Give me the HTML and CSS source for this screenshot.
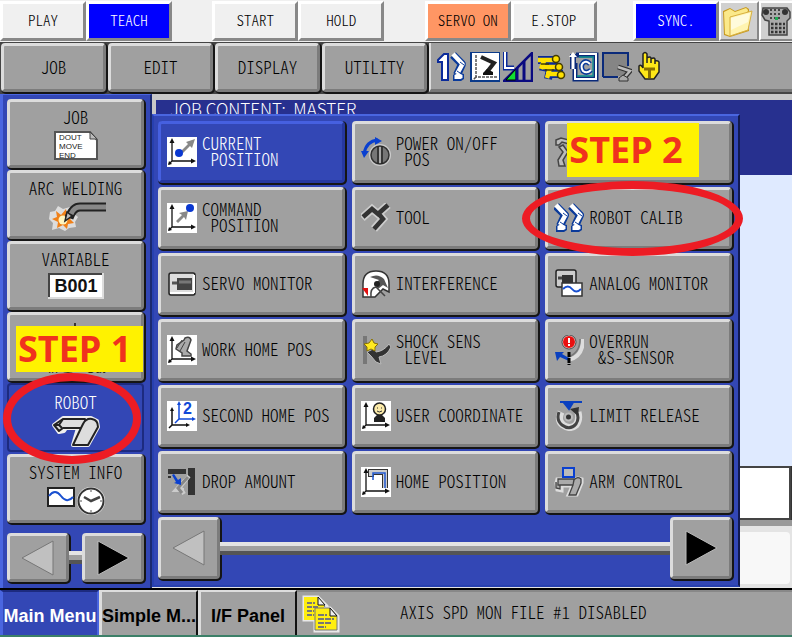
FILE: index.html
```html
<!DOCTYPE html>
<html lang="en">
<head>
<meta charset="utf-8">
<title>Robot menu</title>
<link rel="stylesheet" href="styles.css">
</head>
<body>
<svg class="defs" aria-hidden="true">
  <defs>
    <g id="axes">
      <rect width="30" height="30" fill="#fff"/>
      <path d="M5 3V24H27M5 24L2 27" fill="none" stroke="#111" stroke-width="1.3"/>
      <path d="M5 1l2.5 5h-5zM29 24l-5-2.5v5zM1 28l4-1-3-3z" fill="#111"/>
    </g>
    <g id="arm">
      <path d="M1 2L10 11L5 22" fill="none" stroke="#0a3a9a" stroke-width="8" stroke-linejoin="round"/>
      <path d="M1 28v-6l4-3 7 2v5l-3 2z" fill="#0a3a9a"/>
      <path d="M1 1L10.500 11L5 21" fill="none" stroke="#fff" stroke-width="4.500" stroke-linejoin="round"/>
      <path d="M2.500 26v-4l4-2 4 2v3l-2 1z" fill="#fff"/>
      <path d="M8 9l4 3M5 18l3 2" stroke="#0a3a9a" stroke-width="1"/>
    </g>
  </defs>
</svg>
<header class="status">
  <button class="key">PLAY</button>
  <button class="key key-on">TEACH</button>
  <span class="space"></span>
  <button class="key">START</button>
  <button class="key">HOLD</button>
  <span class="space"></span>
  <button class="key key-servo">SERVO ON</button>
  <button class="key">E.STOP</button>
  <span class="space space-small"></span>
  <button class="key key-on">SYNC.</button>
  <button class="key key-icon" aria-label="Folder"><svg width="34" height="34" viewBox="0 0 34 34"><path d="M2 7l7-3 5 3 11-4 3 2v22L9 33l-6-2z" fill="#c89a20"/><path d="M3 8l6-3 5 3 11-4 2 2-1 4L9 14v18l-5-2z" fill="#fbe98a"/><path d="M9 13l22-6-4 19L9 32z" fill="#fff4b0" stroke="#d8b040"/><path d="M10 14l19-5-2 9-17 8z" fill="#fffbdc"/></svg></button>
  <button class="key key-icon key-pad" aria-label="Pendant"><svg width="30" height="34" viewBox="0 0 30 34"><path d="M2 4h24l3 4v6l-3 3v14H8V17l-4-1-3-5z" fill="#aaa" stroke="#444" stroke-width="1.5"/><circle cx="5" cy="8" r="3" fill="#333"/><circle cx="24" cy="8" r="3" fill="#333"/><path d="M9 6h12M9 10h12M9 14h12" stroke="#444" stroke-width="2" stroke-dasharray="2 2"/><path d="M10 20h14M10 24h14M10 28h14" stroke="#333" stroke-width="2.5" stroke-dasharray="2.5 1.5"/><path d="M14 13h3v3h-3z" fill="#2a5"/></svg></button>
</header>
<nav class="menubar">
  <button class="bevel">JOB</button>
  <button class="bevel">EDIT</button>
  <button class="bevel">DISPLAY</button>
  <button class="bevel">UTILITY</button>
  <div class="tools">
    <svg width="30" height="30" viewBox="0 0 30 30"><path d="M1 8l6-6h4v26H5V10H1z" fill="#fff" stroke="#0a2a9a" stroke-width="2"/><use href="#arm" x="15" y="1"/></svg>
    <svg width="30" height="30" viewBox="0 0 30 30"><path d="M0 0h30v30H0z" fill="#0a3a8a"/><path d="M2 1h27v27H2z" fill="#fff"/><path d="M6 3v22h21M6 25l-3 3" stroke="#555" stroke-width="1.5" stroke-dasharray="3 1" fill="none"/><path d="M11 5l13 6-7 9" stroke="#222" stroke-width="4" fill="none"/><path d="M13 21l4-4 6 3v3H13z" fill="#111"/></svg>
    <svg width="30" height="30" viewBox="0 0 30 30"><path d="M2 0v16h9" stroke="#0a2a9a" stroke-width="5" fill="none"/><path d="M2 0v16h9" stroke="#fff" stroke-width="2" fill="none"/><path d="M1 29L29 1v28z" fill="#a0a0a0" stroke="#0a0a80" stroke-width="2.5"/><path d="M3 28l10-11v11z" fill="#10e030" stroke="#000"/><path d="M14 16v13M21 9v20" stroke="#0a0a80" stroke-width="3"/></svg>
    <svg width="30" height="30" viewBox="0 0 30 30"><g fill="none" stroke="#0a2a9a" stroke-width="8"><path d="M2 8h19M7 15h18M9 10l-2 9M13 22h14M14 17l-2 10"/></g><g fill="none" stroke="#ffe000" stroke-width="4.500"><path d="M2 8h16M7 15h15M10 22h15M8 9l-3 8M14 16l-3 10"/></g><g fill="#ffe000" stroke="#443c00" stroke-width="1.5"><circle cx="20" cy="7" r="3.500"/><circle cx="23" cy="15" r="3.500"/><circle cx="25" cy="23" r="3.500"/></g><path d="M5 12h8M9 18h9" stroke="#443c00" stroke-width="1.500"/></svg>
    <svg width="30" height="30" viewBox="0 0 30 30"><path d="M7 3h20v24H6V11" fill="none" stroke="#0a2a7a" stroke-width="5"/><path d="M10 2h17v25H6V10" fill="none" stroke="#fff" stroke-width="2"/><path d="M10 5h15M24 6v18H8" stroke="#089090" stroke-width="1.3" fill="none"/><path d="M4 2v15" stroke="#0a2a7a" stroke-width="6"/><path d="M4 2v15" stroke="#fff" stroke-width="3"/><path d="M4 0l4 5H0z" fill="#fff"/><path d="M21 12q-4-4-7-1t0 8q4 3 8-1" stroke="#0a3a9a" stroke-width="5" fill="none"/><path d="M21 12q-4-4-7-1t0 8q4 3 8-1" stroke="#fff" stroke-width="2" fill="none"/></svg>
    <svg width="30" height="30" viewBox="0 0 30 30"><path d="M1 1h25v23H1z" fill="#858585"/><path d="M1 25V1h25v13M1 25h15" stroke="#0a2a7a" stroke-width="2" fill="none"/><path d="M16 15l12 4-7 8" stroke="#333" stroke-width="5" fill="none"/><path d="M16 15l12 4-7 8" stroke="#bbb" stroke-width="2.5" fill="none"/><path d="M17 29v-3l4-3 5 3v3z" fill="#aaa" stroke="#333"/></svg>
    <svg width="30" height="32" viewBox="0 0 30 32"><path d="M8 15V3q2-3 4 0v9-5q3-2 4 0v5-4q3-2 4 0v5-3q3-1 4 1v10l-5 7h-9l-6-8V15q2-2 4 2z" fill="#ffe818" stroke="#222" stroke-width="1.5"/><path d="M9 18h11M14.500 18v9" stroke="#8a7000" stroke-width="3"/></svg>
  </div>
</nav>
<main class="main">
  <aside class="side">
    <div class="slot"><button class="bevel side-key">JOB
      <svg width="60" height="29" viewBox="0 0 60 29"><path d="M9 1h35l7 8v19H9z" fill="#fff" stroke="#555" stroke-width="2"/><path d="M44 1v7h7z" fill="#bbb" stroke="#444"/><g font-family="Liberation Sans" font-size="8" fill="#222"><text x="13" y="9">DOUT</text><text x="13" y="18">MOVE</text><text x="13" y="27">END</text></g></svg></button></div>
    <div class="slot"><button class="bevel side-key">ARC WELDING
      <svg width="60" height="29" viewBox="0 0 60 29"><path d="M4 10l5-1 3-5 5 3 7-2 3 6 5 4-3 5 1 5-7 1-4 3-6-3-7 2 1-7-4-4z" fill="#ddd"/><path d="M6 17l5-2-1-6 5 4 5-6 1 6 7-1-4 5 4 4-6 1-1 5-4-4-6 3 1-6z" fill="#f08018"/><circle cx="17" cy="18" r="4.500" fill="#fff6c0"/><path d="M60 5H34q-7 0-11 11" fill="none" stroke="#222" stroke-width="9"/><path d="M60 5H34q-6 0-9 7" fill="none" stroke="#888" stroke-width="5"/><path d="M21 10l5 4-7 5z" fill="#bbb" stroke="#222" stroke-width="1.500"/></svg></button></div>
    <div class="slot"><button class="bevel side-key">VARIABLE
      <svg width="60" height="26" viewBox="0 0 60 26"><path d="M3 1h54v24H3z" fill="#fff" stroke="#ddd" stroke-width="2"/><path d="M3 24V1h53" fill="none" stroke="#444" stroke-width="2"/><text x="30" y="19" text-anchor="middle" font-family="Liberation Sans" font-weight="bold" font-size="18" fill="#111">B001</text></svg></button></div>
    <div class="slot"><button class="bevel side-key side-io">
      <svg width="60" height="56" viewBox="0 0 60 56"><path d="M29 3v3" stroke="#111" stroke-width="1.500"/><path d="M14 50q8 5 16 0" fill="#ddd" stroke="#333"/><g font-family="Liberation Sans" font-size="12" fill="#222"><text x="2" y="53">In</text><text x="40" y="53">Out</text></g></svg></button><strong class="tag tag-one">STEP 1</strong></div>
    <div class="slot"><button class="side-key side-on">ROBOT
      <svg width="60" height="32" viewBox="0 0 60 32"><g stroke-linejoin="round"><path d="M8 9l9-7h28l6 3 1 6-10 18H27l5-17H20l-2 3-5 1z" fill="#eee" stroke="#eee" stroke-width="4"/><path d="M17 3h22l1 9H17l-4 3-5-6z" fill="#ddd" stroke="#222" stroke-width="2"/><path d="M17 3l-4 6 3 3M8 9h5" fill="none" stroke="#222" stroke-width="2"/><path d="M37 8q3-6 9-5t6 8L42 29H27l8-17z" fill="#ddd" stroke="#222" stroke-width="2"/></g></svg></button><span class="ring ring-one"></span></div>
    <div class="slot"><button class="bevel side-key">SYSTEM INFO
      <svg width="60" height="30" viewBox="0 0 60 30"><path d="M2 2h26v18H2z" fill="#fff" stroke="#222" stroke-width="2"/><path d="M3 10q6-8 12 0t12 1" fill="none" stroke="#1a50d0" stroke-width="2"/><circle cx="45" cy="15" r="14" fill="#eee"/><circle cx="45" cy="15" r="12.500" fill="#fff" stroke="#333" stroke-width="2"/><path d="M38 11l7 4 9-4" fill="none" stroke="#444" stroke-width="2.500"/><path d="M45 4v2M45 24v2M34 15h2M54 15h2" stroke="#555"/></svg></button></div>
    <div class="pager">
      <button class="bevel arrow" aria-label="Previous"><svg width="36" height="36" viewBox="0 0 36 36"><path d="M33 1v34L2 18z" fill="#c0c0c0" stroke="#777"/></svg></button>
      <span class="track"></span>
      <button class="bevel arrow" aria-label="Next"><svg width="36" height="36" viewBox="0 0 36 36"><path d="M3 1v34l31-17z" fill="#000" stroke="#bbb"/></svg></button>
    </div>
  </aside>
  <section class="content">
    <h1 class="title">JOB CONTENT:  MASTER</h1>
    <div class="listing"></div>
    <div class="entry"></div>
    <div class="notice"><div class="notice-in"></div></div>
    <div class="popup">
      <div class="grid">
        <div class="cell"><button class="bevel item item-on"><svg width="30" height="30" viewBox="0 0 30 30"><use href="#axes"/><path d="M14 14l7-7-2-2 9-3-3 9-2-2-7 7z" fill="#888"/><circle cx="12" cy="16" r="4" fill="#0a38d0"/></svg><span>CURRENT
 POSITION</span></button></div>
        <div class="cell"><button class="bevel item"><svg width="30" height="30" viewBox="0 0 30 30"><path d="M3 17Q5 4 17 3" fill="none" stroke="#0a40d0" stroke-width="3"/><path d="M21 4l-7-4v8zM3 21l-3-7h8z" fill="#0a40d0"/><circle cx="19" cy="18" r="11" fill="#ccc"/><circle cx="19" cy="18" r="9" fill="#777" stroke="#333" stroke-width="1.500"/><path d="M17 9v18M21 9v18" stroke="#222" stroke-width="1.500"/><path d="M19 10v16" stroke="#aaa" stroke-width="2"/></svg><span>POWER ON/OFF
 POS</span></button></div>
        <div class="cell"><button class="bevel item" aria-labelledby="second"><svg width="30" height="30" viewBox="0 0 30 30"><g fill="#bbb" stroke="#444" stroke-width="1.500"><path d="M2 3l5-2 8 2v4L8 5 5 8H2z"/><path d="M9 8l5 7-5 8 2 6H5l-1-6 5-8-4-5z"/></g></svg></button><strong class="tag tag-two" id="second">STEP 2</strong></div>
        <div class="cell"><button class="bevel item"><svg width="30" height="30" viewBox="0 0 30 30"><use href="#axes"/><path d="M9 18l6-6-3-2 9-2-2 9-2-3-6 6z" fill="#888"/><circle cx="23" cy="5" r="4" fill="#0a38d0"/></svg><span>COMMAND
 POSITION</span></button></div>
        <div class="cell"><button class="bevel item"><svg width="30" height="30" viewBox="0 0 30 30"><path d="M1 15L11 6l6 5L27 2M17 10l5 6-9 10" fill="none" stroke="#ccc" stroke-width="8"/><path d="M2 14l9-8 6 5L27 2M17 10l5 6-9 10" fill="none" stroke="#333" stroke-width="4.500"/></svg><span>TOOL</span></button></div>
        <div class="cell"><button class="bevel item"><svg width="30" height="30" viewBox="0 0 30 30"><use href="#arm" x="1" y="1"/><use href="#arm" x="16" y="1"/></svg><span>ROBOT CALIB</span></button><span class="ring ring-two"></span></div>
        <div class="cell"><button class="bevel item"><svg width="30" height="30" viewBox="0 0 30 30"><rect x="2" y="4" width="26" height="22" rx="2" fill="#ddd" stroke="#222" stroke-width="1.500"/><path d="M3 24h24M27 6v18" stroke="#fff" stroke-width="2"/><path d="M5 14h6" stroke="#555" stroke-width="3"/><path d="M10 9h15v12H10z" fill="#444"/><path d="M12 13h12" stroke="#777" stroke-width="3"/></svg><span>SERVO MONITOR</span></button></div>
        <div class="cell"><button class="bevel item"><svg width="30" height="30" viewBox="0 0 30 30"><path d="M2 28V15Q2 2 15 2t13 13v8l-6-3-8 8z" fill="#fff" stroke="#333" stroke-width="1.500"/><path d="M9 8q8-4 14 2l4 9-5-3-5 4-3-5 4-4z" fill="#555"/><circle cx="16" cy="15" r="3" fill="#222"/><path d="M1 19h6v8z" fill="#e01010"/><path d="M10 28q-1-9 5-10l9 9" fill="none" stroke="#444" stroke-width="1.500"/></svg><span>INTERFERENCE</span></button></div>
        <div class="cell"><button class="bevel item"><svg width="30" height="30" viewBox="0 0 30 30"><rect x="2" y="1" width="20" height="17" rx="2" fill="#ccc" stroke="#222" stroke-width="1.500"/><path d="M8 6h11v8H8z" fill="#333"/><path d="M4 9h4" stroke="#444" stroke-width="3"/><path d="M8 14h20v13H8z" fill="#fff" stroke="#333" stroke-width="1.500"/><path d="M9 20q5-5 9 0t9 0" fill="none" stroke="#1a50d0" stroke-width="2"/></svg><span>ANALOG MONITOR</span></button></div>
        <div class="cell"><button class="bevel item"><svg width="30" height="30" viewBox="0 0 30 30"><use href="#axes"/><path d="M18 3q5-2 6 2l-4 11 4 3v2h-9v-3l-6-4 1-4 7-5z" fill="#aaa" stroke="#444" stroke-width="1.500"/><path d="M18 7l-5 9M15 5l-5 8" stroke="#444"/></svg><span>WORK HOME POS</span></button></div>
        <div class="cell"><button class="bevel item"><svg width="30" height="30" viewBox="0 0 30 30"><path d="M2 1h4v28H2z" fill="#777"/><path d="M6 17l8-4 1 4q8-1 13-8l2 3q-4 9-12 10l2 7-5-2-5-6z" fill="#333" stroke="#bbb"/><path d="M11 4l2 4 4 1-3 3v4l-4-2-4 2v-4L3 9l5-1z" fill="#ffea20" stroke="#887000"/></svg><span>SHOCK SENS
 LEVEL</span></button></div>
        <div class="cell"><button class="bevel item"><svg width="30" height="30" viewBox="0 0 30 30"><path d="M29 4q0 18-15 21" fill="none" stroke="#ddd" stroke-width="4"/><path d="M26 4q0 14-12 18" fill="none" stroke="#777" stroke-width="1.500"/><circle cx="15" cy="7" r="6.500" fill="#e81010" stroke="#fff"/><circle cx="15" cy="7" r="7" fill="none" stroke="#444"/><path d="M15 3v5M15 9v2" stroke="#fff" stroke-width="2"/><path d="M1 17h9l-2 2 7 4v3l-9-4-3 4z" fill="#0a40c0"/><path d="M15 17v13" stroke="#000" stroke-width="3" stroke-dasharray="5 1"/></svg><span>OVERRUN
 &amp;S-SENSOR</span></button></div>
        <div class="cell"><button class="bevel item"><svg width="30" height="30" viewBox="0 0 30 30"><path d="M0 0h30v30H0z" fill="#fff"/><path d="M5 8v16h16M5 24l-3 3" fill="none" stroke="#111" stroke-width="1.500"/><path d="M5 6l2 4H3zM23 24l-4-2v4z" fill="#111"/><path d="M12 3v15h15M12 18l-4 4" fill="none" stroke="#1048d8" stroke-width="1.500"/><path d="M12 0l2 4h-4zM29 18l-4-2v4z" fill="#1048d8"/><text x="16" y="13" font-family="Liberation Sans" font-weight="bold" font-size="16" fill="#1048d8">2</text></svg><span>SECOND HOME POS</span></button></div>
        <div class="cell"><button class="bevel item"><svg width="30" height="30" viewBox="0 0 30 30"><use href="#axes"/><path d="M13 21v-4l3-3h5l3 3v4z" fill="#222"/><circle cx="18.500" cy="8" r="6" fill="#fbeaa8" stroke="#222" stroke-width="1.500"/><path d="M16 7h1M20 7h1M16 10q2 2 5 0" stroke="#333" fill="none"/></svg><span>USER COORDINATE</span></button></div>
        <div class="cell"><button class="bevel item"><svg width="30" height="30" viewBox="0 0 30 30"><path d="M7 11q-4 9 2 13 7 5 13 0 4-5 2-13" fill="none" stroke="#ddd" stroke-width="7"/><path d="M5 11q-3 8 3 13 8 6 14-1 4-6 0-13" fill="none" stroke="#444" stroke-width="3"/><path d="M16 8l9-2-1 9z" fill="#333"/><path d="M6 1h22M11 3h7l-3 5z" fill="#0a40c0" stroke="#0a40c0" stroke-width="2"/><circle cx="14.500" cy="16" r="3.500" fill="#333" stroke="#bbb" stroke-width="2"/></svg><span>LIMIT RELEASE</span></button></div>
        <div class="cell"><button class="bevel item"><svg width="30" height="30" viewBox="0 0 30 30"><path d="M1 2h18v5H1zM21 1h7v27h-7z" fill="#333"/><path d="M22 9l-9 11 4 7M18 13l-9 10h8" fill="none" stroke="#ccc" stroke-width="4"/><path d="M21 10L11 21l4 5" fill="none" stroke="#888" stroke-width="3"/><path d="M7 7l4 6 3-2v7l-7-2 2-1-4-7z" fill="#0a40d0"/><path d="M1 9h3v2H1z" fill="#333"/></svg><span>DROP AMOUNT</span></button></div>
        <div class="cell"><button class="bevel item"><svg width="30" height="30" viewBox="0 0 30 30"><use href="#axes"/><path d="M10 10V5h14v16" fill="none" stroke="#333" stroke-width="6"/><path d="M10 9V5h14v16" fill="none" stroke="#ccc" stroke-width="4"/><path d="M12 13V6h12v15" fill="none" stroke="#2058d0" stroke-width="1.500"/></svg><span>HOME POSITION</span></button></div>
        <div class="cell"><button class="bevel item"><svg width="30" height="30" viewBox="0 0 30 30"><path d="M3 12h17l4-1 4 1v4l-5 12h-9l4-9H8v5l-5-1-1-7z" fill="#ddd" stroke="#ddd" stroke-width="3"/><path d="M4 12h16l-1 6H4zM2 15v6l4 1v-4M20 13q3-4 7-1v4l-5 12h-7l4-10z" fill="#aaa" stroke="#444" stroke-width="1.300"/><path d="M9 1h11v9H9z" fill="#bbb" stroke="#0a40d0" stroke-width="2"/></svg><span>ARM CONTROL</span></button></div>
      </div>
      <div class="pager pager-wide">
        <button class="bevel arrow" aria-label="Previous page"><svg width="36" height="36" viewBox="0 0 36 36"><path d="M33 1v34L2 18z" fill="#c0c0c0" stroke="#777"/></svg></button>
        <span class="track"></span>
        <button class="bevel arrow" aria-label="Next page"><svg width="36" height="36" viewBox="0 0 36 36"><path d="M3 1v34l31-17z" fill="#000" stroke="#bbb"/></svg></button>
      </div>
    </div>
  </section>
</main>
<footer class="foot">
  <button class="tab tab-on">Main Menu</button>
  <button class="tab">Simple M...</button>
  <button class="tab">I/F Panel</button>
  <div class="message">
    <svg width="38" height="38" viewBox="0 0 38 38"><g stroke="#e8e8e8" stroke-width="3"><path d="M2 2h14l9 9v14H2zM13 13h15l8 8v15H13z" fill="#222"/></g><path d="M2 2h14l6 7v16H2z" fill="#ffee10"/><path d="M16 2l7 8h-7z" fill="#eee" stroke="#111"/><path d="M5 8h8M5 12h12M5 16h7M5 20h7" stroke="#777" stroke-width="2" stroke-dasharray="5 1"/><path d="M13 13h15l7 8v14H13z" fill="#ffee10" stroke="#777"/><path d="M28 13l7 8h-7z" fill="#eee" stroke="#111"/><path d="M16 20h9M16 24h16M16 28h14M16 32h8" stroke="#777" stroke-width="2" stroke-dasharray="6 1"/></svg>
    <p>AXIS SPD MON FILE #1 DISABLED</p>
  </div>
</footer>
</body>
</html>
```
FILE: styles.css
```css
* { box-sizing: border-box; margin: 0; }

:root {
  --blue: #3347b5;
  --grey: #a0a0a0;
  --mono: "Noto Sans CJK JP", "Liberation Mono", monospace;
}

html { background: #fff; }

body {
  display: flex;
  flex-direction: column;
  min-height: 100vh;
  margin-right: 5px;
  border-bottom: 2px solid #3c8068;
  overflow-x: hidden;
  font: 300 17px/16px var(--mono);
  font-feature-settings: "hwid";
  color: #000;
}

button {
  padding: 0;
  font: inherit;
  font-feature-settings: inherit;
  color: inherit;
}

svg { display: block; flex: none; }
.defs { position: absolute; width: 0; height: 0; }

/* Operating state keys */
.status {
  display: flex;
  height: 42px;
  padding-top: 1px;
  background: #f0f0f0;
}

.key {
  flex: 0 0 86px;
  height: 40px;
  padding-bottom: 3px;
  border: 3px solid;
  border-color: #fff #888 #888 #fff;
  background: #f0f0f0;
  font-size: 15px;
}

.key-on { background: #0000ff; color: #fff; }
.key-servo { background: #ff9664; }

.key-icon {
  flex-basis: 40px;
  padding: 0;
  border-width: 2px;
  background: #d0d0d0;
}

.key-pad { flex-basis: 33px; border-right: 0; }
.space { flex: 40 1 0; }
.space-small { flex-grow: 36; }

/* Raised grey key */
.bevel {
  border: 3px solid;
  border-color: #dcdcdc #7c7c7c #7c7c7c #dcdcdc;
  border-radius: 4px;
  background: var(--grey);
  box-shadow: 1px 1px 0 1px #151515;
}

.menubar {
  display: flex;
  gap: 2px;
  height: 52px;
  padding: 1px 0 2px 1px;
  background: #444;
}

.menubar > .bevel { flex: 0 0 105px; padding-bottom: 2px; }

.tools {
  flex: 1;
  display: flex;
  align-items: center;
  gap: 3px;
  padding: 2px 0 0 6px;
  border-left: 2px solid #ddd;
  border-bottom: 3px solid #777;
  background: var(--grey);
}

.main { flex: 1; display: flex; background: #333; }

/* Left column */
.side {
  flex: 0 0 152px;
  display: flex;
  flex-direction: column;
  gap: 2px;
  padding: 4px 5px 4px 4px;
  border: solid #4a66e0;
  border-width: 1px 2px 0 3px;
  border-right-color: #1b2a70;
  background: var(--blue);
}

.slot { position: relative; width: 137px; height: 69px; }

.side-key {
  display: flex;
  flex-direction: column;
  align-items: center;
  gap: 6px;
  width: 100%;
  height: 100%;
  padding-top: 7px;
}

.side-on {
  padding-top: 9px;
  border: 2px solid #1d2b80;
  border-radius: 4px;
  background: var(--blue);
  color: #fff;
}

.pager { display: flex; align-items: center; width: 137px; margin-top: 8px; }

.arrow {
  display: grid;
  place-items: center;
  flex: none;
  width: 62px;
  height: 49px;
}

.track {
  flex: 1;
  height: 13px;
  border: solid;
  border-width: 4px 0;
  border-color: #e4e4e4 #555 #555;
  background: var(--grey);
}

/* Job content behind the menu */
.content {
  position: relative;
  flex: 1;
  display: flex;
  flex-direction: column;
  border-top: 6px solid #c8c8c8;
}

.title {
  height: 75px;
  padding: 1px 14px;
  border-left: 4px solid #c8c8c8;
  background: #27308f;
  font: 300 17px/16px var(--mono);
  color: #fff;
  white-space: pre;
}

.listing { flex: 1; background: #dfeaff; }

.entry {
  height: 54px;
  margin-right: 1px;
  border: 2px solid #444;
  background: #fff;
}

.notice {
  height: 68px;
  padding: 6px 2px 4px;
  border-top: 6px solid #999;
  background: #e4e4e4;
}

.notice-in { height: 100%; border-radius: 4px; background: #f8f8f8; }

/* Robot menu */
.popup {
  position: absolute;
  top: 14px;
  right: 52px;
  bottom: 1px;
  left: 0;
  padding: 5px 6px 5px 4px;
  border: 2px solid #2740b0;
  border-top-color: #4a66e0;
  border-right-color: #111a50;
  background: var(--blue);
}

.grid {
  display: grid;
  grid-template-columns: repeat(3, 1fr);
  grid-auto-rows: 62px;
  gap: 4px 7px;
}

.cell { position: relative; }

.item {
  display: flex;
  align-items: center;
  gap: 5px;
  width: 100%;
  height: 100%;
  padding-left: 6px;
  text-align: left;
  white-space: pre;
}

.item span { padding-bottom: 3px; }

.item-on {
  border-color: #4660e0 #2638a0 #2638a0 #4660e0;
  background: var(--blue);
  color: #fff;
}

.pager-wide { width: 100%; margin-top: 4px; }
.pager-wide .arrow { height: 62px; }

/* Callouts */
.tag {
  position: absolute;
  padding: 0 2px;
  background: #fff200;
  font: bold 36px/46px "Open Sans", "Noto Sans", sans-serif;
  font-feature-settings: normal;
  color: #f0321e;
  white-space: nowrap;
}

.tag-one { top: 14px; left: 9px; width: 127px; }
.tag-two { top: 2px; left: 22px; width: 132px; line-height: 54px; }

.side-io { padding-top: 5px; }

.ring {
  position: absolute;
  z-index: 1;
  border: 8px solid #ed1c24;
  border-radius: 50%;
  pointer-events: none;
}

.ring-one { top: -10px; left: -4px; width: 138px; height: 91px; }
.ring-two { top: -6px; left: -23px; width: 221px; height: 75px; }

/* Bottom tabs */
.foot { display: flex; height: 47px; border-top: 2px solid #000; background: var(--grey); }

.tab {
  flex: 0 0 99px;
  padding-top: 5px;
  border: solid;
  border-width: 2px 2px 0 3px;
  border-color: #ddd #111 #111 #ddd;
  background: var(--grey);
  font: bold 18px/20px "Liberation Sans", sans-serif;
  font-feature-settings: normal;
  white-space: nowrap;
}

.tab-on { border-color: #1d2b80 #4a66e0; background: var(--blue); color: #fff; }

.message {
  flex: 1;
  display: flex;
  align-items: center;
  gap: 60px;
  padding-left: 5px;
  border-top: 2px solid #888;
}

.message p { padding-bottom: 3px; }
```
